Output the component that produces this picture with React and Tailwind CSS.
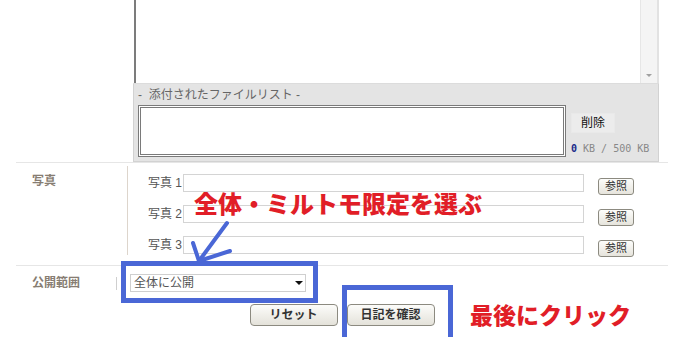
import React from 'react';

const jp = "font-['Liberation_Sans','Noto_Sans_CJK_JP',sans-serif]";

function BrowseButton() {
  return (
    <button
      type="button"
      className="mt-[4px] ml-[14px] flex h-[17px] w-[36px] items-center justify-center rounded-[3px] border border-[#8c8a80] bg-gradient-to-b from-[#fdfdfb] to-[#e6e4dc] text-[11px] leading-none text-[#333]"
    >
      参照
    </button>
  );
}

function PhotoRow({ n }) {
  return (
    <div className="flex h-[18px] items-start overflow-visible">
      <span className="w-[35px] text-[12px] leading-[18px] text-[#555]">写真&nbsp;{n}</span>
      <div className="h-[18px] w-[401px] border border-[#d4d4d4] bg-white" />
      <BrowseButton />
    </div>
  );
}

function PushButton({ children }) {
  return (
    <button
      type="button"
      className="flex h-[22px] w-[88px] items-center justify-center rounded-[4px] border border-[#8c8a80] bg-gradient-to-b from-[#fcfcfa] to-[#e4e2da] text-[12px] font-bold text-[#333]"
    >
      {children}
    </button>
  );
}

export default function App() {
  return (
    <div className={`relative h-[337px] w-[684px] overflow-hidden bg-white ${jp}`}>
      {/* attachment area */}
      <div className="pl-[133px] pr-[25px]">
        <div className="flex h-[84px] border-b border-[#dcdcdc] bg-white">
          <div className="ml-[1px] w-[2px] bg-[#7c7c7c]" />
          <div className="flex-1" />
          <div className="relative w-[17px] border-l border-[#e6e6e6] bg-[#f4f4f4]">
            <span className="absolute bottom-[6px] left-[5px] h-0 w-0 border-x-[3px] border-t-[3px] border-x-transparent border-t-[#a0a0a0]" />
          </div>
          <div className="w-[2px] bg-[#e2e2e2]" />
        </div>
        <div className="flex h-[78px] flex-col border border-t-0 border-[#d2d2d2] bg-[#e4e4e4] pl-[4px]">
          <div className="pt-[4px] text-[12px] leading-[14px] text-[#666]">-&nbsp; 添付されたファイルリスト -</div>
          <div className="mt-[3px] flex">
            <div className="h-[52px] w-[428px] border-[3px] border-double border-[#7a7a7a] bg-white" />
            <div className="ml-[5px] flex flex-col">
              <div className="mt-[8px] flex h-[20px] w-[44px] items-center justify-center border border-[#e9e9e9] bg-[#ececec] text-[12px] text-[#111]">
                削除
              </div>
              <div className="mt-[10px] font-['DejaVu_Sans_Mono',monospace] text-[10px] leading-[12px] text-[#888]">
                <span className="font-bold text-[#1a2a8a]">0</span> KB / 500 KB
              </div>
            </div>
          </div>
        </div>
      </div>

      {/* photos */}
      <div className="mx-[16px] flex h-[103px] border-t border-[#e6e6e6]">
        <div className="w-[111px] pl-[16px] pt-[10px] text-[12px] font-bold leading-[16px] text-[#877d72]">写真</div>
        <div className="mt-[3px] mb-[10px] border-l border-[#ddd5cc]" />
        <div className="flex flex-col gap-[13px] pl-[20px] pt-[11px]">
          <PhotoRow n="1" />
          <PhotoRow n="2" />
          <PhotoRow n="3" />
        </div>
      </div>

      {/* visibility */}
      <div className="mx-[16px] border-t border-[#e6e6e6] pt-[8px]">
        <div className="flex items-center">
          <div className="w-[100px] pl-[16px] text-[12px] font-bold leading-[16px] text-[#877d72]">公開範囲</div>
          <div className="h-[13px] w-px bg-[#cfcfcf]" />
          <div className="ml-[13px] flex h-[18px] w-[176px] items-center justify-between border border-[#cfcfcf] bg-white pl-[3px] pr-[2px]">
            <span className="text-[12px] leading-none text-[#555]">全体に公開</span>
            <span className="h-0 w-0 border-x-[4px] border-t-[4px] border-x-transparent border-t-[#111]" />
          </div>
        </div>
        <div className="mt-[12px] flex justify-center gap-[9px]">
          <PushButton>リセット</PushButton>
          <PushButton>日記を確認</PushButton>
        </div>
      </div>

      {/* annotations */}
      <div className="pointer-events-none absolute left-[121px] top-[261px] h-[42px] w-[197px] border-[5px] border-[#4a67d6]" />
      <div className="pointer-events-none absolute left-[342px] top-[285px] h-[60px] w-[111px] border-[5px] border-[#4a67d6]" />
      <div className="pointer-events-none absolute left-[194px] top-[190px] whitespace-nowrap text-[24px] font-black leading-[30px] text-[#e11e27]">
        全体・ミルトモ限定を選ぶ
      </div>
      <div className="pointer-events-none absolute left-[470px] top-[301px] whitespace-nowrap text-[23px] font-black leading-[30px] text-[#e11e27]">
        最後にクリック
      </div>
      <svg className="pointer-events-none absolute left-0 top-0" width="684" height="337" viewBox="0 0 684 337">
        <g stroke="#4a67d6" strokeWidth="4" strokeLinecap="round" fill="none">
          <line x1="227" y1="223" x2="199" y2="261" />
          <line x1="193" y1="243" x2="199" y2="261" />
          <line x1="199" y1="261" x2="230" y2="251" />
        </g>
      </svg>
    </div>
  );
}
